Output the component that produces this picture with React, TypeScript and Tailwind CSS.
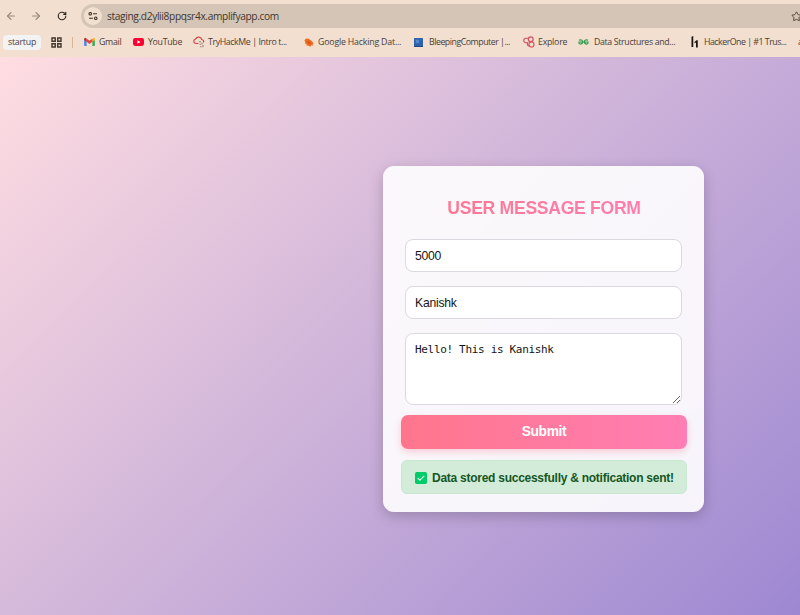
import type { ReactNode } from 'react';
import { ArrowLeft, ArrowRight, RotateCw, Star } from 'lucide-react';

function Gmail() {
  return (
    <svg viewBox="0 0 24 18" className="h-[8px] w-[11px]">
      <path d="M0 3v13.5A1.5 1.5 0 0 0 1.500 18H5.500V7.500z" fill="#4285f4" />
      <path d="M24 3v13.500A1.500 1.500 0 0 1 22.500 18H18.500V7.500z" fill="#34a853" />
      <path d="M18.500 1.500V8.500L24 4.300V2.500C24 0 21.500-.8 19.800.5z" fill="#fbbc04" />
      <path d="M5.500 8.500V1.500L12 6.400l6.500-4.900v7L12 13.400z" fill="#ea4335" />
      <path d="M0 2.500v1.800L5.500 8.500V1.500L4.200.5C2.500-.8 0 0 0 2.500z" fill="#c5221f" />
    </svg>
  );
}

function YouTube() {
  return (
    <svg viewBox="0 0 24 17" className="h-[8px] w-[11px]">
      <rect width="24" height="17" rx="4.500" fill="#ff0033" />
      <path d="M9.500 4.500v8l7-4z" fill="#fff" />
    </svg>
  );
}

function CloudMark() {
  return (
    <svg viewBox="0 0 24 24" className="size-[12px]" fill="none" stroke="#cf4b4b" strokeWidth="2.400">
      <path d="M11 15H5.500a4.500 4.500 0 0 1-.3-8.900A6.500 6.500 0 0 1 17.500 7a4.300 4.300 0 0 1 3.500 6" />
      <path d="M12 11.500h4M18 13v4M13 16.500h3M20 18v4.500M14 21.500h3" stroke="#a08080" strokeWidth="2.200" />
    </svg>
  );
}

function Spider() {
  return (
    <svg viewBox="0 0 24 24" className="size-[11px]">
      <path d="M3 7l4-4 5 1 5 3 4 4 2 3-2 1 1 4-4-1-2 3-4-2-5-1 1-3-4-1 1-3z" fill="#ec6b20" />
      <path d="M9 9l5 1 4 5-6-1z" fill="#d9500f" />
    </svg>
  );
}

function Bleeping() {
  return (
    <svg viewBox="0 0 16 16" className="size-[9px]">
      <rect width="16" height="16" rx="1" fill="#2f62ad" />
      <path d="M3 3h6v6H3z" fill="#5687cb" />
      <path d="M0 14h16v2H0z" fill="#214a8c" />
    </svg>
  );
}

function Explore() {
  return (
    <svg viewBox="0 0 24 24" className="size-[12px]" fill="none" stroke="#d4505f" strokeWidth="2.300">
      <path d="M11 13.500H6a4.500 4.500 0 0 1 0-9h6" />
      <circle cx="15.500" cy="6.500" r="4.800" />
      <circle cx="17" cy="17" r="5" />
      <path d="M9 13.500c-1.500 4 1 7 4 6" />
    </svg>
  );
}

function Geeks() {
  return (
    <svg viewBox="0 0 22 12" className="h-[6px] w-[11px]" fill="none" stroke="#2f9a4c" strokeWidth="2.400">
      <path d="M2 2.500C5 .5 9.500 2 9.500 6S4 11.500 2 8.500V6h18v2.500c-2 3-7.500 1.500-7.500-2.500S17 .5 20 2.500" />
    </svg>
  );
}

function HackerOne() {
  return (
    <svg viewBox="0 0 14 24" className="ml-[1px] h-[12px] w-[7px]" fill="#171412">
      <path d="M1 1.500L4.500 0v22H1zM7 12l4-3.500h2.500V23H10V13l-3 1.500z" />
    </svg>
  );
}

function Bookmark({ icon, label, slot, text }: { icon: ReactNode; label: string; slot: string; text: string }) {
  return (
    <div className={`flex h-full shrink-0 items-center ${slot}`}>
      <span className="flex w-[16px] shrink-0 items-center">{icon}</span>
      <span className={`whitespace-nowrap pt-[2px] ${text}`}>{label}</span>
    </div>
  );
}

function BrowserBar() {
  return (
    <header className="h-[57px] shrink-0 overflow-hidden bg-[#f2dfcf] font-['Open_Sans',sans-serif] text-[#4b4038]">
      <div className="flex h-[31px] items-center">
        <div className="flex w-[81px] shrink-0 items-center pl-[5px]">
          <ArrowLeft className="size-[12px] text-[#998c81]" strokeWidth={2.2} />
          <ArrowRight className="ml-[13px] size-[12px] text-[#998c81]" strokeWidth={2.2} />
          <RotateCw className="ml-[15px] size-[10px] text-[#302923]" strokeWidth={2.8} />
        </div>
        <div className="mt-[1px] flex h-[24px] flex-1 items-center rounded-l-full bg-[#d4c5b6]">
          <span className="ml-[3px] flex size-[18px] shrink-0 items-center justify-center rounded-full bg-[#f1dfcf]">
            <svg viewBox="0 0 20 16" className="h-[8px] w-[10px]" fill="none" stroke="#40362e" strokeWidth="2.200">
              <circle cx="4.500" cy="3.500" r="2.500" />
              <path d="M10 3.500h8M2 12.500h8" />
              <circle cx="15.500" cy="12.500" r="2.500" />
            </svg>
          </span>
          <span className="ml-[5px] flex-1 pt-[2px] text-[10.200px] tracking-[-0.360px] whitespace-nowrap text-[#3f362f]">staging.d2ylii8ppqsr4x.amplifyapp.com</span>
          <Star className="-mr-[2px] size-[11px] shrink-0 text-[#4b4038]" strokeWidth={2} />
        </div>
      </div>
      <nav className="flex h-[22px] items-center text-[8.800px]">
        <span className="ml-[3px] flex h-[15px] w-[38px] shrink-0 items-center justify-center rounded-[4px] bg-[#f3f3f4] pt-px tracking-[-0.220px] text-[#45413f]">startup</span>
        <svg viewBox="0 0 22 22" className="ml-[10px] size-[11px] shrink-0" fill="none" stroke="#40362e" strokeWidth="2.800">
          <path d="M2 2h6.500v6.500H2zM13.500 2H20v6.500h-6.500zM2 13.500h6.500V20H2zM13.500 13.500H20V20h-6.500z" />
        </svg>
        <span className="ml-[10px] h-[11px] w-px shrink-0 bg-[#d8b594]" />
        <div className="ml-[11px] flex h-full shrink-0 items-center">
          <Bookmark icon={<Gmail />} label="Gmail" slot="w-[49px]" text="-ml-[1px] tracking-[-0.280px]" />
          <Bookmark icon={<YouTube />} label="YouTube" slot="w-[60px]" text="-ml-[1px] tracking-[-0.300px]" />
          <Bookmark icon={<CloudMark />} label="TryHackMe | Intro t..." slot="w-[110px]" text="-ml-[1px] tracking-[-0.400px]" />
          <Bookmark icon={<Spider />} label="Google Hacking Dat..." slot="w-[111px]" text="-ml-[1px] tracking-[-0.200px]" />
          <Bookmark icon={<Bleeping />} label="BleepingComputer |..." slot="w-[109px]" text="-ml-[1px] tracking-[-0.480px]" />
          <Bookmark icon={<Explore />} label="Explore" slot="w-[55px]" text="-ml-[1px] tracking-[-0.250px]" />
          <Bookmark icon={<Geeks />} label="Data Structures and..." slot="w-[112px]" text="tracking-[-0.350px]" />
          <Bookmark icon={<HackerOne />} label="HackerOne | #1 Trus..." slot="w-[108px]" text="-ml-[2px] tracking-[-0.500px]" />
          <span className="pt-[2px]">a</span>
        </div>
      </nav>
    </header>
  );
}

export default function App() {
  return (
    <div className="flex h-[615px] w-[800px] flex-col overflow-hidden">
      <BrowserBar />
      <main className="h-[558px] w-[800px] overflow-hidden">
        <div className="flex h-[564px] w-[1087px] items-center justify-center bg-[linear-gradient(135deg,#ffdde1_0%,#c5abd8_48%,#9e88d2_82%,#8a78ce_100%)] font-['Liberation_Sans',Arial,sans-serif]">
          <form className="flex h-[346px] w-[321px] flex-col rounded-[11px] bg-white/90 pt-[31px] pr-[17px] pl-[18px] shadow-[0_4px_14px_rgba(0,0,0,0.2)]">
            <h1 className="h-[22px] bg-gradient-to-r from-[#ff758c] to-[#ff7eb3] bg-clip-text text-center text-[17.600px] leading-[22px] font-bold tracking-[-0.300px] whitespace-nowrap text-transparent">USER MESSAGE FORM</h1>
            <input defaultValue="5000" className="mt-[20px] mr-[5px] ml-[4px] h-[33px] shrink-0 rounded-[8px] border border-[#dcd8df] bg-white px-[9px] pt-[1px] text-[12.200px] tracking-[-0.250px] text-[#151515] outline-none" />
            <input defaultValue="Kanishk" className="mt-[14px] mr-[5px] ml-[4px] h-[33px] shrink-0 rounded-[8px] border border-[#dcd8df] bg-white px-[9px] pt-[1px] text-[12.200px] tracking-[-0.250px] text-[#151515] outline-none" />
            <textarea defaultValue="Hello! This is Kanishk" className="mt-[14px] mr-[5px] ml-[4px] h-[72px] shrink-0 resize rounded-[8px] border border-[#dcd8df] bg-white px-[9px] py-[9px] font-['DejaVu_Sans_Mono',monospace] text-[11px] leading-[13px] tracking-[-0.320px] text-[#151515] outline-none" />
            <button type="button" className="mt-[10px] h-[34px] shrink-0 rounded-[7px] bg-gradient-to-r from-[#ff758c] to-[#ff7eb3] text-[13.800px] font-bold tracking-[-0.360px] text-white shadow-[0_3px_7px_rgba(255,117,140,0.32)]">Submit</button>
            <div className="mt-[11px] flex h-[34px] shrink-0 items-center rounded-[6px] border border-[#c9e8d2] bg-[#d3ecd9] pt-px pl-[13px] text-[12px] font-bold tracking-[-0.260px] whitespace-nowrap text-[#155724]">
              <svg viewBox="0 0 22 22" className="mr-[5px] size-[12px] shrink-0">
                <rect width="22" height="22" rx="3" fill="#00cc6a" />
                <path d="M5 11l4 4 8-8" fill="none" stroke="#e8fff1" strokeWidth="2" />
              </svg>
              <span>Data stored successfully &amp; notification sent!</span>
            </div>
          </form>
        </div>
      </main>
    </div>
  );
}
